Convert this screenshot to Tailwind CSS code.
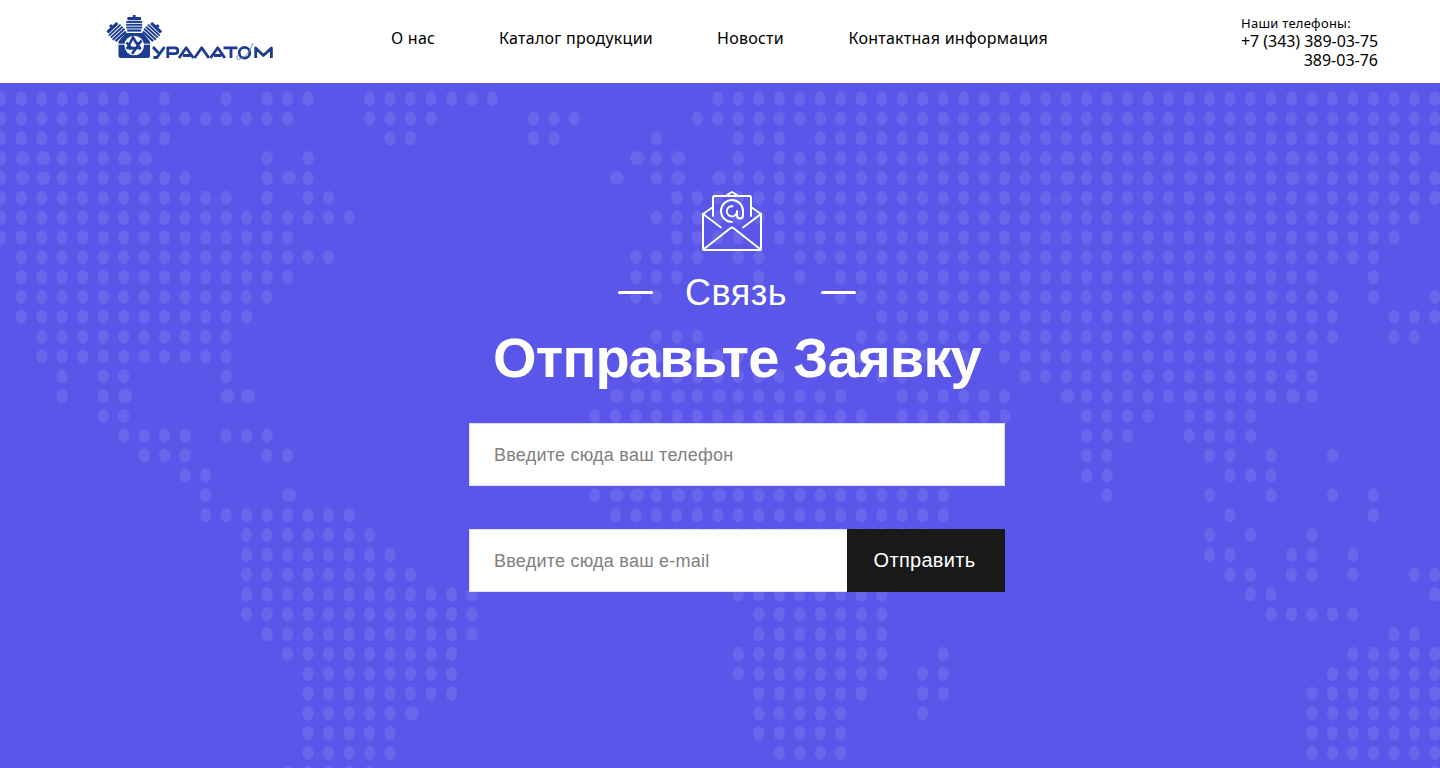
<!DOCTYPE html>
<html lang="ru">
<head>
<meta charset="utf-8">
<title>Уралатом</title>
<script src="https://cdn.jsdelivr.net/npm/@tailwindcss/browser@4"></script>
</head>
<body class="h-screen overflow-hidden bg-[#5956e9] font-['Liberation_Sans',sans-serif]">
<div class="flex h-[768px] w-[1440px] flex-col">
  <header class="flex h-[83px] shrink-0 items-start bg-white font-['Noto_Sans',sans-serif] text-black">
    <svg class="ml-[98px] mt-[10px] h-[55px] w-[180px] shrink-0" viewBox="98 10 180 55" fill="none">
      <g fill="#1c3c90">
        <path d="M118.500 41.500l7-8.500h17.500l7 8.500v14q0 2.500-2.500 2.500h-26.500q-2.500 0-2.500-2.500z"/>
        <g id="cyl"><rect x="132.800" y="15" width="2.800" height="3"/><rect x="127.300" y="17" width="13.800" height="3.200" rx="1"/><rect x="126.200" y="21" width="16" height="1.900"/><rect x="126.200" y="23.800" width="16" height="1.900"/><rect x="126.200" y="26.600" width="16" height="1.900"/><rect x="127.200" y="29.400" width="14" height="2.200"/></g>
        <use href="#cyl" transform="translate(-17.700 7.500) rotate(-43 134.200 24.500)"/>
        <use href="#cyl" transform="translate(17.900 7.500) rotate(43 134.200 24.500)"/>
      </g>
      <circle cx="134.200" cy="45.500" r="9.800" fill="#fff"/>
      <path d="M118 44.200h7M143.500 44.200h7" stroke="#fff"/>
      <g stroke="#1c3c90" stroke-width="2.600">
        <path d="M126.800 49l6.200-11.500 7.500 12M126.500 42.500l5 5.500h9.500M141.500 40.500l-9.500 13.500M128.500 48.500h5M136 43.500l4.500-.5"/>
      </g>
      <g stroke="#1c3c90" stroke-width="2.800" stroke-linejoin="round">
        <path d="M153 47l5.500 6M164.500 47l-7.500 10.500h-3.500"/>
        <path d="M167.800 58V47.800h7.200q2.800 0 2.800 2.900t-2.800 2.900h-7.200"/>
        <path d="M179 58l7.200-10.200 7.200 10.200M183 55.500h7.500"/>
        <path d="M194.500 58l7.200-10.200 7.200 10.200"/>
        <path d="M210.500 58l7.200-10.200 7.200 10.200M214 55.500h7.500"/>
        <path d="M223.500 47.800h14M231 47.800V58"/>
        <circle cx="244.500" cy="52.700" r="5.300"/>
        <path d="M255.700 58V48l7.700 7.500 8-7.500v10"/>
      </g>
      <path d="M239 54c-4 4-2 6 1 5 5-1 11-9 11.500-13" stroke="#7287bc"/>
      <circle cx="252.300" cy="44.500" r="1" fill="#7287bc"/>
    </svg>
    <nav class="ml-[113px] mt-[27px] flex text-base leading-[22px] tracking-[0.25px]">
      <a class="w-[108px] whitespace-nowrap">О нас</a>
      <a class="w-[218px] whitespace-nowrap">Каталог продукции</a>
      <a class="w-[131.500px] whitespace-nowrap">Новости</a>
      <a class="whitespace-nowrap">Контактная информация</a>
    </nav>
    <div class="ml-auto mr-[62px] mt-[14px] w-[137px] whitespace-nowrap text-base leading-[19px]">
      <div class="h-[18px] text-[13px] tracking-[0.25px]">Наши телефоны:</div>
      <div class="tracking-[-0.05px]">+7 (343) 389-03-75</div>
      <div class="text-right">389-03-76</div>
    </div>
  </header>

  <main class="relative h-[685px] overflow-hidden">
    <svg id="map" class="absolute inset-0 h-full w-full" viewBox="0 83 1440 685" fill="#6966eb"></svg>
    <div class="relative ml-[469px] flex w-[536px] flex-col items-center pt-[107px] text-white">
      <svg class="mr-[10px] h-[62px] w-[62px]" viewBox="701 190 62 62" fill="none" stroke="#fff" stroke-width="2" stroke-linecap="round" stroke-linejoin="round">
        <path d="M713 207l-10 7v35q0 1 1 1h56q1 0 1-1v-35l-10-7"/>
        <path d="M713 216v-18.500q0-1.500 1.500-1.500h35q1.500 0 1.500 1.500V216M727 195l5-3 5 3"/>
        <path d="M703 214l18 13.500M761 214l-18 13.500M704 249l26-20.500q2-1.800 4 0L760 249"/>
        <path d="M732 222a11 11 0 1 1 11-11v4.500a3 3 0 0 1-6 0V211M732.500 206.200a5.100 5.100 0 1 0 4.500 6"/>
      </svg>
      <div class="mt-[19px] flex h-[42px] items-center">
        <span class="h-[3px] w-[35px] rounded-full bg-white"></span>
        <span class="mx-[33px] w-[102px] whitespace-nowrap pt-[2px] text-[36px] leading-[42px] tracking-[0.5px] -indent-[1px]">Связь</span>
        <span class="h-[3px] w-[35px] rounded-full bg-white"></span>
      </div>
      <h1 class="mt-[10px] whitespace-nowrap text-[56px] font-bold leading-[70px] tracking-[-0.8px]">Отправьте Заявку</h1>
      <form class="mt-[30px] flex w-full flex-col gap-[43px] text-[18px] tracking-[0.24px]">
        <input class="h-[63px] w-full border border-[#dfdff3] bg-white px-6 pt-[2px] placeholder:text-[#808080]" placeholder="Введите сюда ваш телефон">
        <div class="flex h-[63px]">
          <input class="w-[378px] border border-r-0 border-[#dfdff3] bg-white px-6 pt-[2px] placeholder:text-[#808080]" placeholder="Введите сюда ваш e-mail">
          <button type="button" class="w-[158px] bg-[#191919] pb-[2px] pr-[3px] text-[20px] tracking-[0.3px]">Отправить</button>
        </div>
      </form>
    </div>
  </main>
</div>
<script>
// Dotted world map: one entry per row, column runs; "w" marks a wide dot.
const rows = [
'0-6 8 11 13-15 18-24 35-70','0-14 18-21 26-28 34-70','0-8 19-20 26-27 32 36-38 40-70',
'0 1w 2w 3-5 6w 7w 13 15 31w 32 33w 36 38-51 52w 53-57 58w 59-62 63w 64-69',
'0 1w 2w 3-5 6w 7w 8 9 13 14w 15 30w 32 33w 35w 36-51 52w 53-57 58w 59-62 63w 64-70',
'0-11 13 15-16 33-70','0-17 32-69','0-14 33-36 38-68','1-16 31-34 36-37 39-67','1-14 31-33 37 39 41-64 67',
'1-13 31-32 41-65 67 70','1-12 43-65 68-70','2-11 32-34 42-65 68-69','2-11 31-32 34-36 42-47 49-64','3 5 6 11 31-38 43-44 50-64',
'3 5 6w 11w 12w 30w 31w 32 33w 34 35w 36-41 44-49 52w 53-57 58w 59-62 63w 64',
'5 6 29-42 44-49 53-56 58-61','6-9 11-13 53-55 58-61','7-9 13-14 53-54 59-60 62 65','9-10 53-54 60-62',
'10 14w 29 30w 31w 32 33w 34 35w 36-46 54 59 62 65 67','10-17 30-46 60 67','12-18 32-45 59 61 64','12-19 59-60 63-64 66',
'12-20 60-61 63-64 66 69-70','12-23 36-43 61-62 70','12-23 37-43 62-66','13-23 37-43 68-69','14-22 36-43 46 66-70',
'15-22 36-43 45-46 65-70','15-22 37-42 45-46 64-70','15-19 20w 37-41 45 64-70','15-19 37-41 64-70','15-19 38-41 64-70','14-18 70'];
let dots = '';
rows.forEach((row, r) => row.split(' ').forEach(run => {
  const wide = run.endsWith('w');
  const [a, b = a] = run.replace('w', '').split('-').map(Number);
  for (let c = a; c <= b; c++)
    dots += `<ellipse cx="${(0.75 + 20.488 * c + (wide ? 1.4 : 0)).toFixed(2)}" cy="${(98.7 + 19.83 * r).toFixed(2)}" rx="${wide ? 7.1 : 5.7}" ry="7.1"/>`;
}));
document.getElementById('map').innerHTML = dots;
</script>
</body>
</html>
